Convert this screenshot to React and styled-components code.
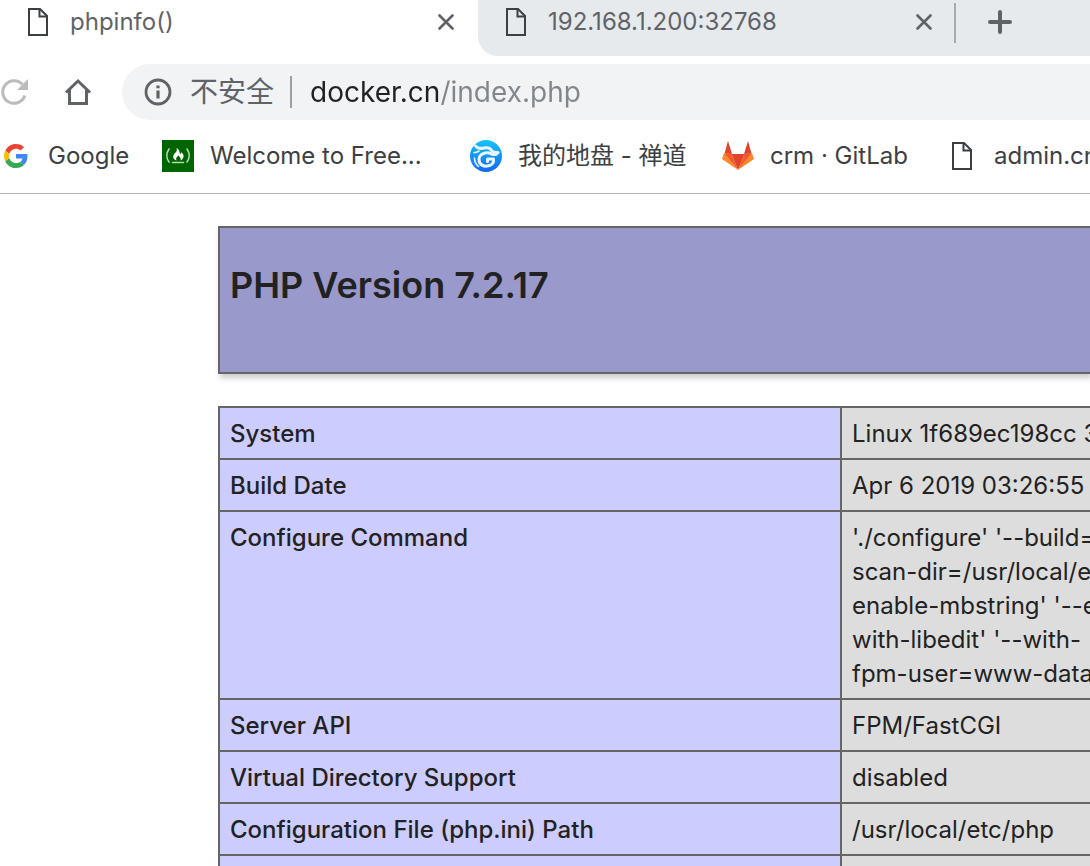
import React from "react";
import styled, { createGlobalStyle } from "styled-components";

const Global = createGlobalStyle`
  * { box-sizing: border-box; }
  body {
    margin: 0;
    background: #fff;
    color: #222;
    font-family: Inter, "Noto Sans CJK SC", sans-serif;
    font-size: 24px;
  }
  button, input { font: inherit; }
`;

const Page = styled.div`
  display: flex;
  flex-direction: column;
  height: 100vh;
  overflow: hidden;
`;

const TabStrip = styled.div`
  display: flex;
  flex: none;
  height: 56px;
`;

const Background = styled.div`
  display: flex;
  flex: 1;
  min-width: 0;
  overflow: hidden;
  background: #e7eaed;
  border-bottom-left-radius: 20px;
`;

const Tab = styled.div`
  display: flex;
  flex: none;
  align-items: center;
  width: ${(p) => (p.$active ? 478 : 476)}px;
  height: 44px;
  padding: 0 ${(p) => (p.$active ? 24 : 22)}px 0 28px;
  gap: 22px;
`;

const TabTitle = styled.span`
  flex: 1;
  color: #5f6368;
  line-height: 32px;
  white-space: nowrap;
`;

const IconButton = styled.button`
  display: flex;
  flex: none;
  padding: 0;
  border: 0;
  background: none;
  color: ${(p) => p.$color || "#5f6368"};
  cursor: pointer;
`;

const TabDivider = styled.span`
  width: 2px;
  height: 40px;
  margin: 3px 32px 0 0;
  background: #a8acb0;
`;

const NewTab = styled(IconButton)`
  align-items: center;
  height: 44px;
`;

const Toolbar = styled.div`
  display: flex;
  flex: none;
  align-items: center;
  gap: 36px;
  height: 56px;
  margin-top: 8px;
`;

const AddressBar = styled.div`
  display: flex;
  flex: 1;
  align-items: center;
  align-self: stretch;
  min-width: 0;
  margin-left: -6px;
  padding-left: 22px;
  background: #f1f3f4;
  border-radius: 28px 0 0 28px;
  font-size: 28px;
`;

const Security = styled.span`
  margin-left: 18px;
  padding-right: 16px;
  border-right: 2px solid #9aa0a6;
  color: #5f6368;
  line-height: 32px;
  white-space: nowrap;
`;

const Url = styled.input`
  flex: 1;
  min-width: 0;
  height: 40px;
  margin-left: 18px;
  padding: 0;
  border: 0;
  outline: 0;
  color: #202124;
  background: linear-gradient(to right, #202124 131px, #80868b 131px);
  background-clip: text;
  -webkit-background-clip: text;
  -webkit-text-fill-color: transparent;
`;

const Bookmarks = styled.nav`
  display: flex;
  flex: none;
  align-items: center;
  gap: 32px;
  height: 74px;
  padding-bottom: 1px;
  border-bottom: 1px solid #b4b4b4;
  overflow: hidden;
`;

const Bookmark = styled.a`
  display: flex;
  flex: none;
  align-items: center;
  gap: 16px;
  color: #3c4043;
  text-decoration: none;
`;

const BookmarkLabel = styled.span`
  width: ${(p) => p.$width}px;
  line-height: 32px;
  white-space: nowrap;
`;

const IconSlot = styled.span`
  display: flex;
  align-items: center;
  justify-content: center;
  width: 32px;
  height: 32px;
`;

const Content = styled.main`
  flex: 1;
  min-height: 0;
  padding: 32px 0 0 20%;
  overflow: hidden;
`;

const Banner = styled.header`
  height: 148px;
  padding: 32px 10px;
  border: 2px solid #666;
  border-right: 0;
  background: #9999cc;
  box-shadow: 2px 4px 6px #ccc;
`;

const Title = styled.h1`
  margin: 0;
  font-size: 36px;
  font-weight: 600;
  line-height: 50px;
`;

const InfoTable = styled.table`
  width: 100%;
  margin-top: 32px;
  table-layout: fixed;
  border-collapse: separate;
  border-spacing: 0;
  border-top: 2px solid #666;
  line-height: 34px;
`;

const Key = styled.th`
  width: 624px;
  padding: 9px 10px 7px;
  border: solid #666;
  border-width: 0 2px 2px;
  background: #ccccff;
  font-weight: 500;
  text-align: left;
  vertical-align: top;
`;

const Value = styled.td`
  height: 52px;
  padding: 9px 0 7px 10px;
  border-bottom: 2px solid #666;
  background: #ddd;
  overflow: hidden;
  vertical-align: top;
  white-space: pre;
`;

const FileIcon = () => (
  <svg width="20" height="28" viewBox="0 0 20 28" fill="none" stroke="#3c4043" strokeWidth="2">
    <path d="M1 1H12L19 8V27H1Z" />
    <path d="M11.5 1V8.5H19" />
  </svg>
);

const CloseIcon = () => (
  <svg width="16" height="16" viewBox="0 0 16 16" fill="none" stroke="currentColor" strokeWidth="2.6" strokeLinecap="round">
    <path d="M1.5 1.5L14.5 14.5M14.5 1.5L1.5 14.5" />
  </svg>
);

const PlusIcon = () => (
  <svg width="24" height="24" viewBox="0 0 24 24" fill="none" stroke="currentColor" strokeWidth="4" strokeLinecap="round">
    <path d="M12 2V22M2 12H22" />
  </svg>
);

const ReloadIcon = () => (
  <svg width="28" height="28" viewBox="0 0 28 28" fill="none">
    <path d="M24.8 17.500A11.300 11.300 0 1 1 22.500 6.500" stroke="currentColor" strokeWidth="3" />
    <path d="M28 1V12H17Z" fill="currentColor" />
  </svg>
);

const HomeIcon = () => (
  <svg width="28" height="28" viewBox="0 0 28 28" fill="none" stroke="currentColor" strokeWidth="3">
    <path d="M2 14.500L14 3L26 14.500" />
    <path d="M5.500 12V25.500H22.500V12" />
  </svg>
);

const InfoIcon = () => (
  <svg width="28" height="28" viewBox="0 0 28 28" fill="none" stroke="currentColor" strokeWidth="2.8">
    <circle cx="14" cy="14" r="12" />
    <path d="M14 12.5V20.5M14 7.5V10.3" strokeWidth="3.200" />
  </svg>
);

const GoogleIcon = () => (
  <svg width="24" height="24" viewBox="0 0 48 48">
    <path fill="#EA4335" d="M24 9.5c3.54 0 6.71 1.22 9.21 3.6l6.85-6.85C35.9 2.38 30.47 0 24 0 14.62 0 6.51 5.38 2.56 13.22l7.98 6.19C12.43 13.72 17.74 9.5 24 9.5z" />
    <path fill="#4285F4" d="M46.98 24.55c0-1.57-.15-3.09-.38-4.55H24v9.02h12.94c-.58 2.96-2.26 5.48-4.78 7.18l7.73 6c4.51-4.18 7.09-10.36 7.09-17.65z" />
    <path fill="#FBBC05" d="M10.53 28.59c-.48-1.45-.76-2.99-.76-4.59s.27-3.14.76-4.59l-7.98-6.19C.92 16.46 0 20.12 0 24c0 3.88.92 7.54 2.56 10.78l7.97-6.19z" />
    <path fill="#34A853" d="M24 48c6.48 0 11.93-2.13 15.89-5.81l-7.73-6c-2.15 1.45-4.92 2.3-8.16 2.3-6.26 0-11.57-4.22-13.47-9.91l-7.98 6.19C6.51 42.62 14.62 48 24 48z" />
  </svg>
);

const CampIcon = () => (
  <svg width="32" height="32" viewBox="0 0 32 32" fill="none">
    <rect width="32" height="32" fill="#006400" />
    <g stroke="#b5d8b5" strokeWidth="1.6" strokeLinecap="round">
      <path d="M7 9Q2.500 15.500 7 22M25 9Q29.500 15.500 25 22M10.500 22.500H21.500" />
    </g>
    <path fill="#fff" d="M14.500 8C18.500 10 17 13 18.500 14C19.500 14 19.300 12.800 19 12C22.500 14.500 22.500 18.500 18.500 20.500C19.500 18 17.500 17 16.500 15.500C14.500 17 13.500 18.500 14.500 20.500C9.500 18.500 11 15 13.500 12.500C15.200 11 15 9.500 14.500 8Z" />
  </svg>
);

const ZentaoIcon = () => (
  <svg width="32" height="32" viewBox="0 0 32 32" fill="none">
    <defs>
      <linearGradient id="zentao" x1="0" y1="0" x2="0" y2="1">
        <stop offset="0" stopColor="#12c4fb" />
        <stop offset="1" stopColor="#1767f2" />
      </linearGradient>
    </defs>
    <circle cx="16" cy="16" r="16" fill="url(#zentao)" />
    <g stroke="#e8f7ff" strokeLinecap="round" strokeLinejoin="round">
      <path strokeWidth="3" d="M5.500 6C8 9.500 11.500 8.500 15 7.800C19 7.200 21 9 22 11C24 12.800 26 12.500 28 12.500C26.500 14.500 24 15 21.500 14C16 11 9 14 9 19.500C9 25 14 27 18.500 25.800C22 25 24 22.500 23.500 19H17.500V21.500" />
      <path strokeWidth="1.600" d="M4 12.500C6 13 7.500 12 9 11M4.500 18C4.500 22 6 24.500 8.500 26.500" />
    </g>
  </svg>
);

const GitlabIcon = () => (
  <svg width="32" height="32" viewBox="0 0 32 32">
    <path fill="#e24329" d="M16 30L9.500 14H22.500Z" />
    <path fill="#f9582b" d="M16 30L2 13.500L9.500 14ZM16 30L30 13.500L22.500 14Z" />
    <path fill="#fc8a28" d="M2 13L0 19L16 30ZM30 13L32 19L16 30Z" />
    <path fill="#e24329" d="M2.500 13.500L6 1L10 14ZM29.500 13.500L26 1L22 14Z" />
  </svg>
);

const bookmarks = [
  { label: "Google", icon: <GoogleIcon />, width: 82 },
  { label: "Welcome to Free...", icon: <CampIcon />, width: 228 },
  { label: "我的地盘 - 禅道", icon: <ZentaoIcon />, width: 172 },
  { label: "crm · GitLab", icon: <GitlabIcon />, width: 144 },
  { label: "admin.cn", icon: <FileIcon />, width: 112 },
];

const rows = [
  ["System", "Linux 1f689ec198cc 3"],
  ["Build Date", "Apr 6 2019 03:26:55"],
  [
    "Configure Command",
    "'./configure' '--build=\nscan-dir=/usr/local/e\nenable-mbstring' '--e\nwith-libedit' '--with-\nfpm-user=www-data",
  ],
  ["Server API", "FPM/FastCGI"],
  ["Virtual Directory Support", "disabled"],
  ["Configuration File (php.ini) Path", "/usr/local/etc/php"],
  ["", ""],
];

export default function App() {
  return (
    <Page>
      <Global />
      <TabStrip>
        <Tab $active>
          <FileIcon />
          <TabTitle>phpinfo()</TabTitle>
          <IconButton aria-label="Close tab"><CloseIcon /></IconButton>
        </Tab>
        <Background>
          <Tab>
            <FileIcon />
            <TabTitle>192.168.1.200:32768</TabTitle>
            <IconButton aria-label="Close tab"><CloseIcon /></IconButton>
          </Tab>
          <TabDivider />
          <NewTab aria-label="New tab"><PlusIcon /></NewTab>
        </Background>
      </TabStrip>
      <Toolbar>
        <IconButton aria-label="Reload" $color="#babcbe"><ReloadIcon /></IconButton>
        <IconButton aria-label="Home"><HomeIcon /></IconButton>
        <AddressBar>
          <IconButton aria-label="Site information"><InfoIcon /></IconButton>
          <Security>不安全</Security>
          <Url aria-label="Address" defaultValue="docker.cn/index.php" spellCheck={false} />
        </AddressBar>
      </Toolbar>
      <Bookmarks aria-label="Bookmarks">
        {bookmarks.map((b) => (
          <Bookmark key={b.label} href="#">
            <IconSlot>{b.icon}</IconSlot>
            <BookmarkLabel $width={b.width}>{b.label}</BookmarkLabel>
          </Bookmark>
        ))}
      </Bookmarks>
      <Content>
        <Banner>
          <Title>PHP Version 7.2.17</Title>
        </Banner>
        <InfoTable>
          <tbody>
            {rows.map(([key, value]) => (
              <tr key={key}>
                <Key scope="row">{key}</Key>
                <Value>{value}</Value>
              </tr>
            ))}
          </tbody>
        </InfoTable>
      </Content>
    </Page>
  );
}
